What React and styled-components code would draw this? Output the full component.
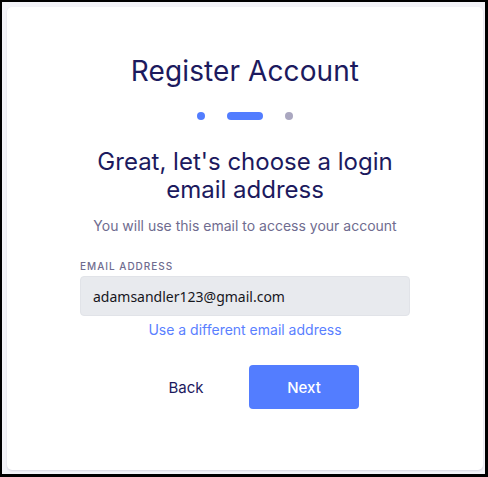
import React from "react";
import styled, { createGlobalStyle } from "styled-components";

const Global = createGlobalStyle`
  html, body { margin: 0; padding: 0; background: #000; }
  body { font-family: Inter, "Liberation Sans", sans-serif; }
  * { box-sizing: border-box; }
`;

const Frame = styled.div`
  width: 488px;
  height: 477px;
  padding: 2px 3px 3px 2px;
  background: #000;
`;

const Page = styled.div`
  width: 100%;
  height: 100%;
  background: #f3f3f8;
  padding: 5px 2px 4px 5px;
`;

const Card = styled.div`
  height: 100%;
  background: #fff;
  border-radius: 5px;
  box-shadow: 0 1px 2px rgba(40, 40, 90, 0.14);
  display: flex;
  flex-direction: column;
  align-items: center;
  padding-top: 47px;
`;

const Title = styled.h1`
  margin: 0;
  font-size: 28px;
  line-height: 34px;
  font-weight: 400;
  color: #1c1a5e;
  letter-spacing: 0.1px;
`;

const Steps = styled.div`
  display: flex;
  align-items: center;
  gap: 22px;
  margin-top: 24px;
  height: 8px;
`;

const Step = styled.span`
  display: block;
  height: 8px;
  width: ${(p) => (p.$active ? "36px" : "8px")};
  border-radius: 4px;
  background: ${(p) => (p.$done || p.$active ? "#527dff" : "#aaa7c0")};
`;

const Heading = styled.h2`
  margin: 28px 0 0;
  font-size: 24px;
  line-height: 28px;
  font-weight: 400;
  color: #1c1a5e;
  text-align: center;
  width: 340px;
`;

const Sub = styled.p`
  margin: 12px 0 0;
  font-size: 14px;
  line-height: 20px;
  color: #6f6c8f;
`;

const Field = styled.div`
  width: 330px;
  margin-top: 24px;
  display: flex;
  flex-direction: column;
`;

const Label = styled.label`
  font-size: 10px;
  line-height: 12px;
  letter-spacing: 1px;
  text-transform: uppercase;
  color: #6f6c8f;
  font-weight: 500;
  margin-bottom: 4px;
`;

const Input = styled.div`
  height: 40px;
  background: #e8eaee;
  border: 1px solid #e1e3e8;
  border-radius: 4px;
  display: flex;
  align-items: center;
  padding-left: 12px;
  font-family: "Noto Sans", "Open Sans", sans-serif;
  font-size: 14px;
  color: #16161c;
`;

const Link = styled.a`
  margin-top: 4px;
  font-size: 14px;
  line-height: 20px;
  color: #5a7fff;
  text-decoration: none;
`;

const Actions = styled.div`
  display: flex;
  gap: 8px;
  margin-top: 25px;
`;

const Button = styled.button`
  width: 110px;
  height: 44px;
  border: none;
  border-radius: 4px;
  font-family: Inter, "Liberation Sans", sans-serif;
  font-size: 15px;
  font-weight: ${(p) => (p.$primary ? 500 : 400)};
  background: ${(p) => (p.$primary ? "#537dff" : "transparent")};
  color: ${(p) => (p.$primary ? "#fff" : "#1c1a5e")};
  cursor: pointer;
`;

export default function App() {
  return (
    <>
      <Global />
      <Frame>
        <Page>
          <Card>
            <Title>Register Account</Title>
            <Steps>
              <Step $done />
              <Step $active />
              <Step />
            </Steps>
            <Heading>Great, let's choose a login email address</Heading>
            <Sub>You will use this email to access your account</Sub>
            <Field>
              <Label>Email address</Label>
              <Input>adamsandler123@gmail.com</Input>
            </Field>
            <Link href="#">Use a different email address</Link>
            <Actions>
              <Button>Back</Button>
              <Button $primary>Next</Button>
            </Actions>
          </Card>
        </Page>
      </Frame>
    </>
  );
}
